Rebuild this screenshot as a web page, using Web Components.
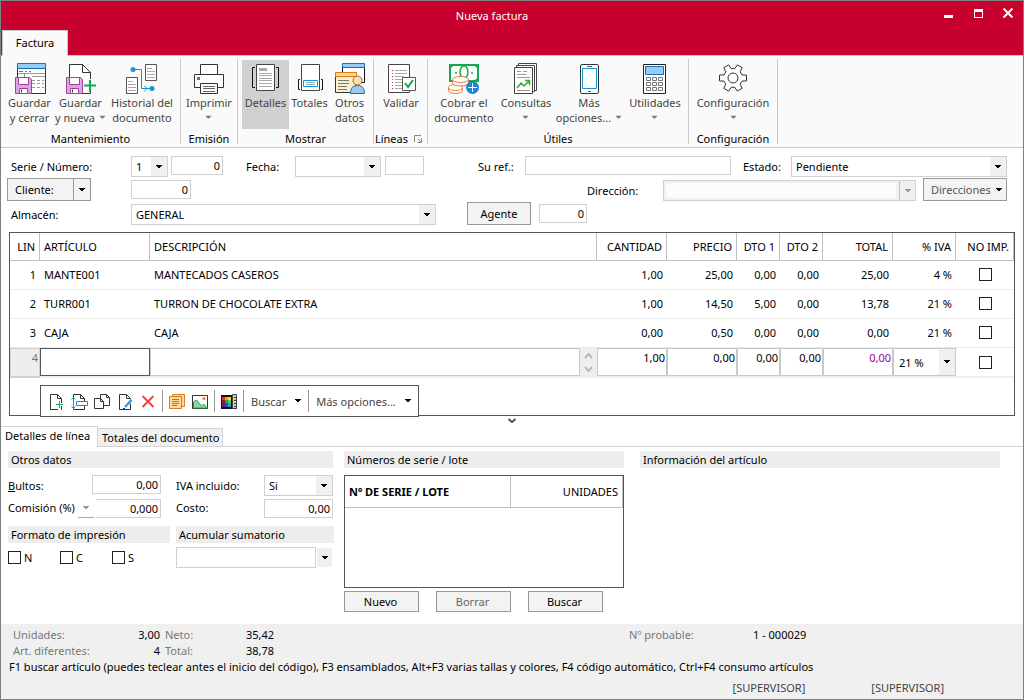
<!DOCTYPE html>
<html lang="es">
<head>
<meta charset="utf-8">
<title>Nueva factura</title>
<style>
html, body { margin: 0; }
body { font: 11px/15px "Noto Sans", "Open Sans", sans-serif; color: #000; background: #fff; }
</style>
</head>
<body>
<invoice-window></invoice-window>
<script>
const BASE = `
*, *::before, *::after { box-sizing: border-box; }
[hidden] { display: none; }
input, select, button { font: inherit; color: inherit; margin: 0; border-radius: 0; outline: none; }
input:not([type=checkbox]) { height: 19px; min-width: 0; padding: 0 2px 1px; border: 1px solid #d0d0d0; background: #fff; }
input.num { text-align: right; }
input[type=checkbox] { appearance: none; width: 13px; height: 13px; border: 1px solid #222; background: #fff; flex: none; }
input[type=checkbox]:checked { background: #0a64ad; }
button { height: 23px; padding: 0 8px; border: 1px solid #999; background: #f3f3f3; white-space: nowrap; }
table { border-collapse: separate; border-spacing: 0; }
th { font-weight: 400; }
`;

/* Registers an element whose shadow root is cloned from a template. */
function element(name, css, html, setup) {
  const template = document.createElement('template');
  template.innerHTML = `<style>${BASE}${css}</style>${html}`;
  customElements.define(name, class extends HTMLElement {
    constructor() {
      super();
      this.attachShadow({ mode: 'open' }).append(template.content.cloneNode(true));
    }
    connectedCallback() { if (setup) setup.call(this, this.shadowRoot); }
  });
}

/* Outline of a six-toothed gear centred in a 32px box. */
function gearPath() {
  const points = [];
  for (let tooth = 0; tooth < 6; tooth++) {
    for (const [turn, radius] of [[-19, 9.5], [-12, 13.8], [12, 13.8], [19, 9.5]]) {
      const angle = (tooth * 60 + turn) * Math.PI / 180;
      points.push(`${(16 + radius * Math.cos(angle)).toFixed(1)} ${(16 + radius * Math.sin(angle)).toFixed(1)}`);
    }
  }
  return `M${points.join('L')}z`;
}

const floppy = `<g stroke="#a040a0" fill="#dba8dc"><path d="M1.500 15.500h14l2 2v14h-16z"/><path fill="#fff" d="M4.500 15.500h10v7h-10zM5.500 26.500h8v5h-8z"/><path d="M7.500 27.500v3" stroke="#444"/></g>`;
const page = `<path fill="#fff" stroke="#333" d="M2.500 1.500h7l4 4v11h-11z"/><path fill="none" stroke="#333" d="M9.500 1.500v4h4"/>`;
const ICONS = {
  saveClose: `<path fill="#fff" stroke="#333" d="M3.500 2.500h28v29h-28z"/><path fill="#9ccbf2" stroke="#1173c0" d="M3.500 1.500h28v5h-28z"/><path stroke="#777" fill="none" d="M5 9.500h4M11 9.500h2M15 9.500h2"/><path stroke="#999" fill="none" d="M4 11.500h27M10.500 12v3M18 14.500h13M18 18.500h3M23 18.500h3M28 18.500h2M18 21.500h3M23 21.500h3M28 21.500h2M18 25.500h3M23 25.500h3M28 25.500h2"/>${floppy}`,
  saveNew: `<path fill="#fff" stroke="#333" d="M4.500 2.500h13l8 8v21h-21z"/><path fill="none" stroke="#333" d="M17.500 2.500v8h8"/>${floppy}<path stroke="#fafafa" stroke-width="5" d="M18 23.500h14M25 17v13"/><path stroke="#18a84c" stroke-width="2" d="M19 23.500h12M25 18v12"/>`,
  history: `<path fill="#fff" stroke="#555" d="M19.500 2.500h11v16h-11zM.5 15.500h11v16h-11z"/><path stroke="#aaa" d="M21 6.500h5M21 9.500h8M21 12.500h8M21 15.500h8M2 19.500h5M2 22.500h8M2 25.500h8M2 28.500h8"/><path fill="none" stroke="#0b98dc" d="M8 7.500h7.500v19h10M18 23.500l3 3-3 3"/><g fill="#0b98dc"><circle cx="7" cy="7.500" r="2.500"/><circle cx="26" cy="26.500" r="2.500"/></g>`,
  print: `<g fill="#fff" stroke="#333"><path d="M7.500 2.500h17v10h-17z"/><path d="M1.500 12.500h29v13h-29z"/><path d="M7.500 21.500h17v10h-17z"/></g><path fill="#1d86cd" d="M4 15h3v3h-3z"/><path stroke="#666" d="M10 24.500h12M10 26.500h12M10 29.500h12"/>`,
  details: `<path fill="#fff" stroke="#444" d="M6.500 2.500h18v26h-18z"/><path fill="#aaa" d="M9 6h8v3h-8z"/><path stroke="#aaa" d="M9 11.500h13M9 13.500h13M9 16.500h13M9 18.500h13M9 21.500h13M9 24.500h13"/><path fill="none" stroke="#111" d="M5 5.500h-2.500v20h2.500M26 5.500h2.500v20h-2.500"/>`,
  totals: `<path fill="#fff" stroke="#444" d="M7.500 2.500h18v26h-18z"/><path fill="#fff" stroke="#0b98dc" d="M9.500 18.500h14v6h-14z"/><path stroke="#aaa" d="M12 20.500h9M12 22.500h9"/><path fill="none" stroke="#111" d="M6 17.500h-1.500v10h1.500M27 17.500h1.500v10h-1.500"/>`,
  other: `<path fill="#fff" stroke="#111" d="M8.500 2.500h22v18h-22z"/><path fill="#9ccbf2" stroke="#1173c0" d="M8.500 1.500h22v4h-22z"/><path fill="#fcefcf" stroke="#333" d="M1.500 14.500h20v16h-20z"/><path fill="#fcd58f" stroke="#e07a20" d="M1.500 10.500h21v4h-21z"/><path stroke="#777" d="M4 18.500h11M4 21.500h11M4 24.500h9M4 27.500h9"/><path fill="#9cc8ea" stroke="#1173c0" d="M16.500 31.500c0-5 2-8 7-8s7 3 7 8z"/><circle cx="23.500" cy="18.500" r="4.500" fill="#fbdcae" stroke="#b5651d"/>`,
  validate: `<path fill="#fff" stroke="#444" d="M3.500 2.500h21v28h-21z"/><path stroke="#aaa" d="M10 8.500h12M10 11.500h12M10 14.500h9M10 17.500h7M10 20.500h7M10 23.500h7M10 26.500h7"/><path stroke="#b22" stroke-dasharray="1 5" d="M7.500 8v19"/><path stroke="#2a8" stroke-dasharray="1 5" d="M7.500 11v16"/><path fill="#fff" stroke="#555" d="M17.500 15.500h13v13h-13z"/><path fill="none" stroke="#18a84c" stroke-width="2" d="M20 21l3 4 5-7"/>`,
  cash: `<path fill="#fff" stroke="#18a84c" stroke-width="2" d="M2 3h28v16h-28z"/><path fill="#18a84c" d="M1 2h6l-6 6zM31 2v6l-6-6zM31 20v-6l-6 6z"/><ellipse cx="16" cy="10" rx="4" ry="6" fill="none" stroke="#18a84c" stroke-width="1.500"/><circle cx="8" cy="11" r="1" fill="#18a84c"/><circle cx="24" cy="11" r="1" fill="#18a84c"/><g fill="#fff" stroke="#ec7a35"><path d="M.5 25.500v3c0 4 14 4 14 0v-3z"/><ellipse cx="7.500" cy="25.500" rx="7" ry="3"/><path d="M4.500 17.500v3.500c0 4 16 4 16 0v-3.500z"/><ellipse cx="12.500" cy="17.500" rx="8" ry="3"/></g><circle cx="24.500" cy="25.500" r="6.500" fill="#1d86cd"/><path stroke="#fff" d="M20 25.500h9M24.500 21v9"/>`,
  queries: `<g fill="#fff" stroke="#444"><path d="M8.500 1.500h18v27h-18z"/><path d="M6.500 3.500h18v26h-18z"/><path d="M4.500 5.500h18v26h-18z"/></g><path stroke="#999" d="M7 9.500h4M13 9.500h4M7 12.500h9M7 15.500h13M7 28.500h13"/><path fill="none" stroke="#39a935" stroke-width="1.500" d="M7 26l4-5 3 3 5-5M15 18.500h4.500v4.500"/>`,
  phone: `<rect x="7.500" y="2.500" width="18" height="29" rx="1.500" fill="#fff" stroke="#333"/><path fill="#fff" stroke="#0b98dc" d="M9.500 6.500h14v20h-14z"/><path stroke="#555" d="M14 4.500h5M15 29.500h3"/>`,
  calc: `<path fill="#fff" stroke="#222" d="M4.500 2.500h22v29h-22z"/><path fill="#9ccbf2" stroke="#1173c0" d="M6.500 4.500h18v8h-18z"/><g fill="#fff" stroke="#777">${[7.5, 13.5, 19.5].map(x => [15.5, 20.5, 25.5].map(y => `<path d="M${x} ${y}h4v3h-4z"/>`).join('')).join('')}</g>`,
  gear: `<path fill="#fff" stroke="#333" stroke-linejoin="round" d="${gearPath()}"/><circle cx="16" cy="16" r="5" fill="#fff" stroke="#333"/>`,
  pageAdd: `${page}<path stroke="#fff" stroke-width="3" d="M7 11.500h9M11.500 7v11"/><path stroke="#18a84c" d="M8 11.500h7M11.500 8v7"/>`,
  insert: `${page}<path fill="#fff" stroke="#1d86cd" d="M5.500 8.500h11v4h-11z"/><path stroke="#18a84c" fill="none" d="M2.500 5v10M.5 6.500l2-2 2 2M.5 13.500l2 2 2-2"/>`,
  copy: `<path fill="#fff" stroke="#333" d="M6.500 1.500h6l3 3v8h-9z"/><path fill="none" stroke="#333" d="M12.500 1.500v3h3"/><path fill="#fff" stroke="#333" d="M.5 5.500h6l3 3v7h-9z"/><path fill="none" stroke="#333" d="M6.500 5.500v3h3"/>`,
  edit: `${page}<path stroke="#fff" stroke-width="4" d="M7 15l7-8"/><path stroke="#3c96dc" stroke-width="2.500" d="M8 14l6.500-7"/><path stroke="#333" d="M6 15.500h2"/>`,
  remove: `<path stroke="#ef4444" stroke-width="2" d="M2.500 3l11 11M13.500 3l-11 11"/>`,
  notes: `<path fill="#fbdc9c" stroke="#e07a20" d="M3.500 1.500h12v12h-12z"/><path fill="#fbdc9c" stroke="#e07a20" d="M.5 3.500h12v12h-12z"/><path stroke="#a87a3a" d="M3 6.500h7M3 8.500h7M3 10.500h7M3 12.500h5"/>`,
  image: `<path fill="#fff" stroke="#333" d="M.5 2.500h15v13h-15z"/><circle cx="12" cy="5.500" r="1.500" fill="#ec7a35"/><path fill="#8fd3a8" stroke="#18a84c" d="M1.500 9l3-2 5 6 2-2 4 4h-14z"/>`,
  palette: `<path fill="#111" d="M0 2h16v14h-16z"/><g><path fill="#e33" d="M1 4h3v3h-3z"/><path fill="#f90" d="M4 4h3v3h-3z"/><path fill="#fd2" d="M7 4h3v3h-3z"/><path fill="#a12" d="M1 7h3v3h-3z"/><path fill="#0a7" d="M4 7h3v3h-3z"/><path fill="#6c3" d="M7 7h3v3h-3z"/><path fill="#529" d="M1 10h3v4h-3z"/><path fill="#15c" d="M4 10h3v4h-3z"/><path fill="#39d" d="M7 10h3v4h-3z"/></g><path fill="#ccc" stroke="#444" d="M11.500 1.500h4v14h-4z"/><path stroke="#444" d="M13 4.500h2M13 7.500h2M13 10.500h2M13 13.500h2"/>`,
  arrow: `<path fill="currentColor" d="M5 6h6v1h-1v1h-1v1h-2v-1h-1v-1h-1z"/>`,
  chevron: `<path fill="none" stroke="#555" stroke-width="2" d="M4.500 6l3.500 3 3.500-3"/>`,
  launcher: `<path fill="none" stroke="#888" d="M4.500 11v-6.500h6.500M8 8l3 3M11.500 7.500v4h-4"/>`,
  minimize: `<path fill="#fff" d="M4 10h9v3h-9z"/>`,
  maximize: `<path fill="#fff" d="M4 4h9v9h-9zM5 7v5h7v-5z" fill-rule="evenodd"/>`,
  close: `<path stroke="#fff" stroke-width="2" d="M3.500 3.500l9 9M12.500 3.500l-9 9"/>`,
};

element('ui-icon', `
:host { display: inline-block; width: var(--icon, 16px); height: var(--icon, 16px); flex: none; }
svg { display: block; width: 100%; height: 100%; fill: none; overflow: visible; }`,
`<svg aria-hidden="true"></svg>`, function (root) {
  const big = this.hasAttribute('big');
  if (big) this.style.setProperty('--icon', '32px');
  const svg = root.querySelector('svg');
  svg.setAttribute('viewBox', big ? '0 0 32 32' : '0 0 16 16');
  svg.innerHTML = ICONS[this.getAttribute('name')];
});

/* Frame and arrow for a slotted <select>; the label stays beside the select. */
element('combo-box', `
:host { display: inline-grid; grid-template-columns: minmax(0, 1fr) 16px; height: 21px; border: 1px solid #d0d0d0; background: #fff; box-sizing: border-box; min-width: 0; }
::slotted(select) { grid-area: 1 / 1 / 2 / 3; width: 100%; height: 100%; appearance: none; border: 0 !important; background: transparent; padding: 0 16px 0 4px !important; z-index: 1; }
.arrow { grid-area: 1 / 2; background: #f0f0f0; display: flex; align-items: center; justify-content: center; }
:host([off]) { background: #f0f0f0; color: #999; }
:host([off]) ::slotted(select) { grid-area: 1 / 1; background: #fff !important; margin: 2px 3px 2px 2px !important; width: auto; height: 15px; }
:host([off]) .arrow { border-left: 1px solid #c0c0c0; }
:host([line]) { border-width: 0 0 1px; border-color: #aaa; color: #999; }
:host([line]) .arrow { background: none; }
:host([outer]) { border: 0; }
:host([outer]) ::slotted(select) { grid-area: 1 / 1; border: 1px solid #d0d0d0 !important; }
:host([outer]) .arrow { margin: 1px 0 1px 1px; }`,
`<slot></slot><span class="arrow"><ui-icon name="arrow"></ui-icon></span>`);

element('title-bar', `
:host { display: grid; grid-template-columns: 1fr auto 1fr; grid-template-rows: 29px 25px; background: #c8002d; color: #fff; }
h1 { grid-column: 2; margin: 0; font: inherit; line-height: 29px; padding-right: 40px; }
.controls { grid-column: 3; justify-self: end; display: flex; gap: 14px; padding: 4px 7px 0 0; }
.controls button { width: 16px; height: 16px; padding: 0; border: 0; background: none; display: flex; }
.tabs { grid-column: 1 / 4; padding-left: 1px; }
.tabs button { height: 26px; width: 66px; padding-bottom: 2px; border: 1px solid #c8c8c8; border-bottom: 0; background: #fafafa; color: #000; position: relative; z-index: 1; }`,
`<h1>Nueva factura</h1>
<div class="controls"><button aria-label="Minimizar"><ui-icon name="minimize"></ui-icon></button><button aria-label="Maximizar"><ui-icon name="maximize"></ui-icon></button><button aria-label="Cerrar"><ui-icon name="close"></ui-icon></button></div>
<nav class="tabs"><button>Factura</button></nav>`);

element('ribbon-button', `
:host { display: block; flex: none; }
button { display: flex; flex-direction: column; align-items: center; width: 100%; height: 69px; padding: 2px 0 0; border: 0; background: none; color: #444; line-height: 15px; }
:host([selected]) button { background: #d0d0d0; }
.text { padding-top: 1px; white-space: pre; text-align: center; }
.text ui-icon { --icon: 15px; vertical-align: top; color: #777; }
.text.tail ui-icon { margin-right: -4px; }`,
`<button><span class="text"></span></button>`, function (root) {
  const icon = document.createElement('ui-icon');
  icon.setAttribute('big', '');
  icon.setAttribute('name', this.getAttribute('icon'));
  root.querySelector('button').prepend(icon);
  const text = root.querySelector('.text');
  const label = this.getAttribute('label');
  text.textContent = label.replace('|', '\n');
  if (this.hasAttribute('menu')) {
    if (label.includes('|')) text.classList.add('tail');
    else text.append('\n');
    text.insertAdjacentHTML('beforeend', '<ui-icon name="arrow"></ui-icon>');
  }
});

element('ribbon-group', `
:host { display: flex; flex-direction: column; border-right: 1px solid #c8c8c8; height: 85px; flex: none; box-sizing: border-box; }
.buttons { display: flex; flex: none; height: 72px; padding: 1px var(--end, 0) 0 var(--start, 0); }
.name { display: flex; flex: none; justify-content: center; align-items: center; gap: 2px; height: 15px; line-height: 15px; white-space: nowrap; }`,
`<div class="buttons"><slot></slot></div><div class="name"><span></span><slot name="launcher"></slot></div>`, function (root) {
  root.querySelector('.name span').textContent = this.getAttribute('name');
});

element('ribbon-bar', `
:host { display: flex; height: 93px; padding-top: 3px; background: #fafafa; border-top: 1px solid #c8c8c8; border-bottom: 1px solid #c8c8c8; box-sizing: border-box; }
.w39 { width: 39px; } .w41 { width: 41px; } .w47 { width: 47px; } .w52 { width: 52px; } .w51 { width: 51px; } .w58 { width: 58px; } .w56 { width: 56px; } .w72 { width: 72px; } .w74 { width: 74px; } .w88 { width: 88px; }
.first { --start: 3px; --end: 2px; } .show { --start: 4px; --end: 4px; } .lines { --start: 1px; } .tools { --end: 4px; }`,
`<ribbon-group name="Mantenimiento" class="first">
<ribbon-button class="w51" icon="saveClose" label="Guardar|y cerrar"></ribbon-button>
<ribbon-button class="w51" icon="saveNew" label="Guardar|y nueva" menu></ribbon-button>
<ribbon-button class="w72" icon="history" label="Historial del|documento"></ribbon-button>
</ribbon-group>
<ribbon-group name="Emisión"><ribbon-button class="w56" icon="print" label="Imprimir" menu></ribbon-button></ribbon-group>
<ribbon-group name="Mostrar" class="show">
<ribbon-button class="w47" icon="details" label="Detalles" selected></ribbon-button>
<ribbon-button class="w41" icon="totals" label="Totales"></ribbon-button>
<ribbon-button class="w39" icon="other" label="Otros|datos"></ribbon-button>
</ribbon-group>
<ribbon-group name="Líneas" class="lines"><ribbon-button class="w52" icon="validate" label="Validar"></ribbon-button><ui-icon slot="launcher" name="launcher"></ui-icon></ribbon-group>
<ribbon-group name="Útiles" class="tools">
<ribbon-button class="w72" icon="cash" label="Cobrar el|documento"></ribbon-button>
<ribbon-button class="w52" icon="queries" label="Consultas" menu></ribbon-button>
<ribbon-button class="w74" icon="phone" label="Más|opciones..." menu></ribbon-button>
<ribbon-button class="w58" icon="calc" label="Utilidades" menu></ribbon-button>
</ribbon-group>
<ribbon-group name="Configuración"><ribbon-button class="w88" icon="gear" label="Configuración" menu></ribbon-button></ribbon-group>`);

element('invoice-header', `
:host { display: block; padding: 6px 16px 0 6px; }
.row { display: flex; align-items: flex-start; height: 24px; }
.row > input, .row > combo-box { margin-top: 2px; }
label { line-height: 24px; padding-top: 1px; white-space: nowrap; flex: none; }
.first { width: 124px; padding-left: 4px; }
.split { display: flex; width: 84px; margin-right: 40px; }
.split .main { flex: 1; text-align: left; padding-left: 7px; }
.split .more { width: 17px; padding: 0; border-left: 0; }
.more ui-icon { display: block; }
.directions { width: 84px; margin-left: 7px; padding: 0 0 0 7px; color: #555; display: flex; align-items: center; }
.directions ui-icon { color: #000; }
.agent { width: 64px; margin: 0 8px 0 31px; }
.n48 { width: 48px; } .n52 { width: 52px; } .n60 { width: 60px; } .n39 { width: 39px; }`,
`<div class="row"><label class="first" for="serie">Serie / Número:</label>
<combo-box style="width:37px"><select id="serie"><option>1</option></select></combo-box>
<input class="num n52" style="margin-left:3px" aria-label="Número" value="0">
<label for="fecha" style="width:72px;padding-left:23px">Fecha:</label>
<combo-box style="width:86px"><select id="fecha"><option></option></select></combo-box>
<input class="n39" style="margin-left:4px" aria-label="Hora">
<label for="ref" style="width:101px;padding-left:54px">Su ref.:</label>
<input id="ref" style="flex:1 1 206px">
<label for="estado" style="width:60px;padding-left:12px">Estado:</label>
<combo-box style="flex:1 1 216px"><select id="estado"><option>Pendiente</option></select></combo-box></div>
<div class="row"><span class="split"><button class="main">Cliente:</button><button class="more" aria-label="Más"><ui-icon name="arrow"></ui-icon></button></span>
<input class="num n60" aria-label="Cliente" value="0"><span style="flex:1 1 396px"></span>
<label for="dir" style="width:76px">Dirección:</label>
<combo-box off style="flex:1 1 253px"><select id="dir" disabled><option></option></select></combo-box>
<button class="directions">Direcciones<ui-icon name="arrow"></ui-icon></button></div>
<div class="row"><label class="first" for="alm">Almacén:</label>
<combo-box style="flex:1 1 305px"><select id="alm"><option>GENERAL</option></select></combo-box>
<button class="agent">Agente</button><input class="num n48" aria-label="Agente" value="0"><span style="flex:1 1 420px"></span></div>`);

element('line-toolbar', `
:host { display: flex; align-items: center; height: 32px; padding: 0 7px; border: 1px solid #555; background: #fff; color: #444; box-sizing: border-box; }
button { display: flex; align-items: center; flex: none; height: 22px; padding: 0; border: 0; background: none; }
button + button { margin-left: 7px; }
i { flex: none; width: 1px; height: 22px; background: #999; margin: 0 6px; }
.text { margin-left: 1px; }
.text ui-icon { color: #000; margin: 0 -4px 0 4px; }`,
`<button aria-label="Nueva línea"><ui-icon name="pageAdd"></ui-icon></button><button aria-label="Insertar"><ui-icon name="insert"></ui-icon></button><button aria-label="Duplicar"><ui-icon name="copy"></ui-icon></button><button aria-label="Modificar"><ui-icon name="edit"></ui-icon></button><button aria-label="Eliminar"><ui-icon name="remove"></ui-icon></button><i></i>
<button aria-label="Notas"><ui-icon name="notes"></ui-icon></button><button aria-label="Imagen"><ui-icon name="image"></ui-icon></button><i></i>
<button aria-label="Tallas y colores"><ui-icon name="palette"></ui-icon></button><i></i>
<button class="text">Buscar<ui-icon name="arrow"></ui-icon></button><i></i><button class="text">Más opciones...<ui-icon name="arrow"></ui-icon></button>`);

const LINES = [
  ['1', 'MANTE001', 'MANTECADOS CASEROS', '1,00', '25,00', '0,00', '0,00', '25,00', '4 %'],
  ['2', 'TURR001', 'TURRON DE CHOCOLATE EXTRA', '1,00', '14,50', '5,00', '0,00', '13,78', '21 %'],
  ['3', 'CAJA', 'CAJA', '0,00', '0,50', '0,00', '0,00', '0,00', '21 %'],
];
element('invoice-lines', `
:host { display: block; position: relative; margin: 6px 8px 0; min-height: 184px; flex: 1 0 184px; border: 1px solid #555; box-sizing: border-box; }
table { width: 100%; table-layout: fixed; }
th { height: 28px; padding: 0 4px; border-right: 1px solid #c0c0c0; border-bottom: 1px solid #c0c0c0; text-align: left; white-space: nowrap; }
th:nth-child(n+4), td:nth-child(n+4), th:first-child, td:first-child { text-align: right; }
td { height: 29px; padding: 0 4px 1px; border-bottom: 1px solid #ececec; white-space: nowrap; }
td.check { text-align: center; padding-bottom: 3px; }
td.check input { display: inline-block; vertical-align: middle; }
.edit td { height: 30px; padding: 0; border-bottom: 2px solid #eee; background: #eee; vertical-align: top; }
.edit td.check { background: #fff; vertical-align: middle; padding-bottom: 1px; }
.edit td:first-child { border: 1px solid #d0d0d0; border-bottom-width: 2px; padding: 1px 1px 0 0; color: #777; }
.edit input:not([type=checkbox]) { display: block; width: 100%; height: 28px; padding: 0 1px 9px; border-color: #c8c8c8; }
.edit input.article { border-color: #555; }
.edit input.total { color: #909; }
.desc { display: flex; }
.spin { flex: none; width: 17px; display: flex; flex-direction: column; justify-content: space-between; align-items: center; padding: 1px 0; }
.spin svg { display: block; width: 9px; height: 12px; }
.edit combo-box { display: grid; height: 28px; border-color: #c8c8c8; padding-left: 1px; }
line-toolbar { position: absolute; left: 30px; bottom: -2px; width: 379px; }`,
`<table><colgroup><col style="width:30px"><col style="width:110px"><col><col style="width:70px"><col style="width:70px"><col style="width:43px"><col style="width:43px"><col style="width:70px"><col style="width:63px"><col style="width:58px"></colgroup>
<thead><tr>${['LIN', 'ARTÍCULO', 'DESCRIPCIÓN', 'CANTIDAD', 'PRECIO', 'DTO 1', 'DTO 2', 'TOTAL', '% IVA', 'NO IMP.'].map(h => `<th>${h}</th>`).join('')}</tr></thead>
<tbody>${LINES.map(r => `<tr>${r.map(c => `<td>${c}</td>`).join('')}<td class="check"><input type="checkbox" aria-label="No imprimir"></td></tr>`).join('')}
<tr class="edit"><td>4</td><td><input class="article" aria-label="Artículo"></td>
<td><div class="desc"><input aria-label="Descripción"><span class="spin"><svg viewBox="0 0 9 12" fill="none" stroke="#b8b8b8" stroke-width="2"><path d="M1 9l3.500-4 3.500 4"/></svg><svg viewBox="0 0 9 12" fill="none" stroke="#b8b8b8" stroke-width="2"><path d="M1 4l3.500 4 3.500-4"/></svg></span></div></td>
<td><input class="num" aria-label="Cantidad" value="1,00"></td><td><input class="num" aria-label="Precio" value="0,00"></td><td><input class="num" aria-label="Dto 1" value="0,00"></td><td><input class="num" aria-label="Dto 2" value="0,00"></td><td><input class="num total" aria-label="Total" value="0,00"></td>
<td><combo-box><select aria-label="% IVA"><option>21 %</option></select></combo-box></td><td class="check"><input type="checkbox" aria-label="No imprimir"></td></tr></tbody></table>
<line-toolbar></line-toolbar>`);

element('detail-tabs', `
:host { display: flex; align-items: flex-end; height: 21px; border-bottom: 1px solid #d4d4d4; box-sizing: border-box; }
button { border: 1px solid #d4d4d4; border-bottom: 0; }
.on { width: 97px; height: 21px; margin-bottom: -1px; padding: 0 4px 3px; border-left: 0; background: #fff; text-align: left; }
.off { width: 125px; height: 18px; padding: 0 4px; border-left: 0; background: #f0f0f0; }`,
`<button class="on">Detalles de línea</button><button class="off">Totales del documento</button>`);

element('section-title', `
:host { display: block; height: 17px; padding-left: 3px; background: #ededed; line-height: 18px; box-sizing: border-box; white-space: nowrap; }
h2 { margin: 0; font: inherit; }`, `<h2><slot></slot></h2>`);

element('other-data', `
:host { display: block; }
.grid { display: grid; grid-template-columns: 71px 13px 69px 15px 88px 69px; grid-auto-rows: 24px; padding-top: 7px; }
label { line-height: 22px; white-space: nowrap; }
.value { grid-column: 3; }
.wide { grid-column: 1 / 3; }
.iva { grid-column: 5; }
.low { line-height: 18px; }
.commission { grid-column: 1 / 4; display: flex; align-items: flex-start; }
.commission label { flex: 1; }
.commission combo-box { width: 16px; height: 19px; margin-right: 2px; }
.commission input { width: 65px; border-left: 0; }
.pair { display: grid; grid-template-columns: 162px 158px; column-gap: 6px; padding-top: 3px; }
.checks { display: flex; align-items: flex-start; padding-top: 7px; }
.checks label { display: flex; align-items: center; gap: 3px; width: 52px; line-height: 15px; }
.pair combo-box { width: 156px; margin-top: 4px; }`,
`<section-title>Otros datos</section-title>
<div class="grid"><label class="wide" for="bultos"><u>B</u>ultos:</label><input id="bultos" class="num value" value="0,00">
<label class="iva" for="iva">IVA incluido:</label><combo-box><select id="iva"><option>Si</option></select></combo-box>
<div class="commission"><label class="low" for="com">Comisión (%)</label><combo-box line><select aria-label="Tipo de comisión"><option></option></select></combo-box><input id="com" class="num" value="0,000"></div>
<label class="iva low" for="costo">Costo:</label><input id="costo" class="num" value="0,00"></div>
<div class="pair"><section-title>Formato de impresión</section-title><section-title>Acumular sumatorio</section-title>
<div class="checks"><label><input type="checkbox">N</label><label><input type="checkbox">C</label><label><input type="checkbox">S</label></div>
<combo-box outer><select aria-label="Acumular sumatorio"><option></option></select></combo-box></div>`);

element('serial-numbers', `
:host { display: block; }
.list { height: 113px; margin-top: 7px; border: 1px solid #555; }
table { width: 100%; table-layout: fixed; }
th { height: 32px; padding: 0 4px; border-right: 1px solid #c0c0c0; border-bottom: 1px solid #c0c0c0; text-align: right; }
th:first-child { text-align: left; font-weight: 700; width: 166px; }
.actions { display: flex; gap: 17px; margin-top: 3px; }
.actions button { width: 75px; height: 21px; padding: 0 2px 0 0; }
button:disabled { color: #666; }`,
`<section-title>Números de serie / lote</section-title>
<div class="list"><table><thead><tr><th>Nº DE SERIE / LOTE</th><th>UNIDADES</th></tr></thead><tbody></tbody></table></div>
<div class="actions"><button>Nuevo</button><button disabled>Borrar</button><button>Buscar</button></div>`);

element('line-details', `
:host { display: grid; grid-template-columns: 325px 280px minmax(0, 1fr); gap: 0 11px; height: 177px; padding: 4px 23px 0 7px; box-sizing: border-box; }
.info { margin-left: 5px; }`,
`<other-data></other-data><serial-numbers></serial-numbers><section-title class="info">Información del artículo</section-title>`);

element('status-footer', `
:host { display: block; height: 75px; padding: 3px 8px 0; background: #f0f0f0; box-sizing: border-box; }
.stats { display: grid; grid-template-columns: 96px 51px 48px 66px 1fr 124px 262px; grid-auto-rows: 16px; line-height: 16px; padding-left: 4px; }
.stats span { color: #777; } .stats b { font-weight: 400; text-align: right; } .stats .t { padding-left: 5px; } .stats .left { text-align: left; }
p { margin: 0; line-height: 16px; }
.users { display: flex; justify-content: flex-end; gap: 66px; margin-right: 71px; line-height: 16px; padding-top: 5px; color: #444; }`,
`<div class="stats"><span>Unidades:</span><b>3,00</b><span class="t">Neto:</span><b>35,42</b><i></i><span>Nº probable:</span><b class="left">1 - 000029</b>
<span>Art. diferentes:</span><b>4</b><span class="t">Total:</span><b>38,78</b></div>
<p>F1 buscar artículo (puedes teclear antes el inicio del código), F3 ensamblados, Alt+F3 varias tallas y colores, F4 código automático, Ctrl+F4 consumo artículos</p>
<div class="users"><span>[SUPERVISOR]</span><span>[SUPERVISOR]</span></div>`);

element('invoice-window', `
:host { display: flex; flex-direction: column; min-height: 100vh; border: 1px solid #808080; box-sizing: border-box; background: #fff; }
.fold { display: flex; justify-content: center; align-items: center; height: 10px; }
.fold button { display: flex; width: 16px; height: 10px; padding: 0; border: 0; background: none; align-items: center; }`,
`<title-bar></title-bar><ribbon-bar></ribbon-bar><invoice-header></invoice-header><invoice-lines></invoice-lines>
<div class="fold"><button aria-label="Plegar detalles"><ui-icon name="chevron"></ui-icon></button></div>
<detail-tabs></detail-tabs><line-details></line-details><status-footer></status-footer>`);
</script>
</body>
</html>
